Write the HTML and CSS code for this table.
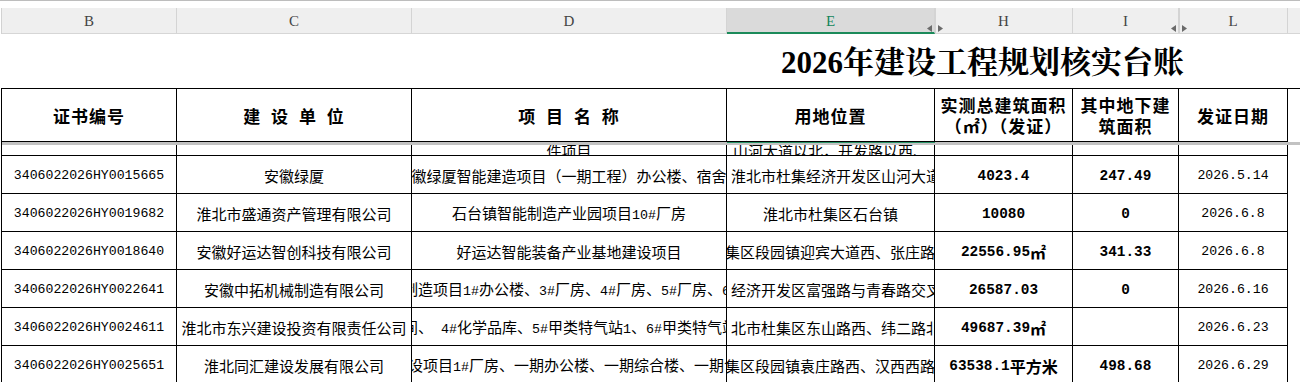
FILE: index.html
```html
<!DOCTYPE html>
<html lang="zh-CN">
<head>
<meta charset="utf-8">
<title>2026年建设工程规划核实台账</title>
<link rel="stylesheet" href="styles.css">
</head>
<body>
<div class="sheet">
  <div class="topline"></div>
  <div class="colhead">
    <div class="ch">B</div>
    <div class="ch">C</div>
    <div class="ch">D</div>
    <div class="ch sel">E</div>
    <div class="ch hid">H<svg class="mark" width="16" height="8" viewBox="0 0 16 8"><polygon points="5,0 5,7 0,3.5" fill="#6b6b6b"/><polygon points="11,0 11,7 16,3.5" fill="#6b6b6b"/></svg></div>
    <div class="ch">I</div>
    <div class="ch hid">L<svg class="mark" width="16" height="8" viewBox="0 0 16 8"><polygon points="5,0 5,7 0,3.5" fill="#6b6b6b"/><polygon points="11,0 11,7 16,3.5" fill="#6b6b6b"/></svg></div>
    <div class="ch end"></div>
  </div>
  <div class="titlerow">
    <h1 class="title"><span class="tnum">2026</span>年建设工程规划核实台账</h1>
  </div>
  <div class="tbl">
    <!-- header -->
    <div class="c hd"><div>证书编号</div></div>
    <div class="c hd"><div class="sp">建 设 单 位</div></div>
    <div class="c hd"><div class="sp">项 目 名 称</div></div>
    <div class="c hd"><div>用地位置</div></div>
    <div class="c hd"><div>实测总建筑面积<br>（㎡）（发证）</div></div>
    <div class="c hd"><div>其中地下建<br>筑面积</div></div>
    <div class="c hd"><div>发证日期</div></div>
    <div class="x"></div>
    <!-- freeze band -->
    <div class="bd"></div>
    <div class="bd"></div>
    <div class="bd"></div>
    <div class="bd g"></div>
    <div class="bd"></div>
    <div class="bd"></div>
    <div class="bd"></div>
    <div class="bd"></div>
    <!-- clipped row -->
    <div class="c part"></div>
    <div class="c part"></div>
    <div class="c part"><span>件项目</span></div>
    <div class="c part"><span>山河大道以北，开发路以西、</span></div>
    <div class="c part"></div>
    <div class="c part"></div>
    <div class="c part"></div>
    <div class="x"></div>
    <!-- row 1 -->
    <div class="c r id">3406022026HY0015665</div>
    <div class="c r">安徽绿厦</div>
    <div class="c r"><span>安徽绿厦智能建造项目（一期工程）办公楼、宿舍楼</span></div>
    <div class="c r l"><span class="p4">淮北市杜集经济开发区山河大道以北</span></div>
    <div class="c r"><span class="bn">4023.4</span></div>
    <div class="c r"><span class="bn">247.49</span></div>
    <div class="c r dt">2026.5.14</div>
    <div class="x"></div>
    <!-- row 2 -->
    <div class="c r id">3406022026HY0019682</div>
    <div class="c r">淮北市盛通资产管理有限公司</div>
    <div class="c r"><span>石台镇智能制造产业园项目<span class="a">10#</span>厂房</span></div>
    <div class="c r"><span>淮北市杜集区石台镇</span></div>
    <div class="c r"><span class="bn">10080</span></div>
    <div class="c r"><span class="bn">0</span></div>
    <div class="c r dt">2026.6.8</div>
    <div class="x"></div>
    <!-- row 3 -->
    <div class="c r id">3406022026HY0018640</div>
    <div class="c r">安徽好运达智创科技有限公司</div>
    <div class="c r"><span>好运达智能装备产业基地建设项目</span></div>
    <div class="c r l"><span class="m2">集区段园镇迎宾大道西、张庄路东</span></div>
    <div class="c r"><span class="bn">22556.95</span><span class="bc">㎡</span></div>
    <div class="c r"><span class="bn">341.33</span></div>
    <div class="c r dt">2026.6.8</div>
    <div class="x"></div>
    <!-- row 4 -->
    <div class="c r id">3406022026HY0022641</div>
    <div class="c r">安徽中拓机械制造有限公司</div>
    <div class="c r l"><span class="m9">制造项目<span class="a">1#</span>办公楼、<span class="a">3#</span>厂房、<span class="a">4#</span>厂房、<span class="a">5#</span>厂房、<span class="a">6#</span>厂房</span></div>
    <div class="c r l"><span class="p4">经济开发区富强路与青春路交叉口</span></div>
    <div class="c r"><span class="bn">26587.03</span></div>
    <div class="c r"><span class="bn">0</span></div>
    <div class="c r dt">2026.6.16</div>
    <div class="x"></div>
    <!-- row 5 -->
    <div class="c r id">3406022026HY0024611</div>
    <div class="c r">淮北市东兴建设投资有限责任公司</div>
    <div class="c r l"><span class="m9">间、<span class="a"> 4#</span>化学品库、<span class="a">5#</span>甲类特气站<span class="a">1</span>、<span class="a">6#</span>甲类特气站<span class="a">2</span></span></div>
    <div class="c r l"><span class="p4">北市杜集区东山路西、纬二路北侧</span></div>
    <div class="c r"><span class="bn">49687.39</span><span class="bc">㎡</span></div>
    <div class="c r"></div>
    <div class="c r dt">2026.6.23</div>
    <div class="x"></div>
    <!-- row 6 -->
    <div class="c r id">3406022026HY0025651</div>
    <div class="c r">淮北同汇建设发展有限公司</div>
    <div class="c r l"><span class="m4">设项目<span class="a">1#</span>厂房、一期办公楼、一期综合楼、一期食堂</span></div>
    <div class="c r l"><span class="m2">集区段园镇袁庄路西、汉西西路东</span></div>
    <div class="c r"><span class="bn">63538.1</span><span class="bc">平方米</span></div>
    <div class="c r"><span class="bn">498.68</span></div>
    <div class="c r dt">2026.6.29</div>
    <div class="x"></div>
  </div>
</div>
</body>
</html>
```

FILE: styles.css
```css
* {
  box-sizing: border-box;
  margin: 0;
  padding: 0;
}

body {
  margin: 0;
  background: #ffffff;
  color: #000000;
  font-family: "Noto Sans CJK SC", sans-serif;
  width: 1300px;
  height: 382px;
  overflow: hidden;
}

.sheet {
  width: 1300px;
}

.topline {
  height: 8px;
  border-top: 1px solid #bdbdbd;
}

.colhead {
  display: grid;
  grid-template-columns: 175px 235px 315px 208px 138px 106px 109px 1fr;
  height: 26px;
  margin-left: 1px;
  border-left: 1px solid #d2d2d2;
}

.ch {
  position: relative;
  display: flex;
  align-items: center;
  justify-content: center;
  padding-top: 2px;
  background: #efefef;
  border-right: 1px solid #d4d4d4;
  border-bottom: 1px solid #d6d6d6;
  font-family: "Liberation Serif", serif;
  font-size: 15px;
  color: #444444;
}

.ch.sel {
  background: #dadada;
  border-bottom: 2px solid #1b8a5a;
  color: #13855a;
}

.ch.hid {
  box-shadow: inset 1px 0 0 #d4d4d4;
}

.ch.end {
  border-right: none;
}

.mark {
  position: absolute;
  left: -8px;
  top: 17px;
}

.titlerow {
  height: 54px;
  display: flex;
  align-items: center;
  padding-left: 781px;
  padding-top: 3px;
}

.title {
  font-family: "Liberation Serif", "Noto Serif CJK SC", "Noto Sans CJK SC", serif;
  font-size: 31px;
  font-weight: 700;
  line-height: 34px;
  white-space: nowrap;
}

.tnum {
  font-family: "Liberation Serif", serif;
}

.tbl {
  display: grid;
  grid-template-columns: 175px 235px 315px 208px 138px 106px 109px 1fr;
  grid-template-rows: 53px 3px 11px repeat(6, 38px);
  margin-left: 1px;
  border-left: 1px solid #000000;
  border-top: 1px solid #000000;
}

.c {
  display: flex;
  align-items: center;
  justify-content: center;
  overflow: hidden;
  white-space: nowrap;
  border-right: 1px solid #000000;
  border-bottom: 1px solid #000000;
  font-size: 15px;
  line-height: 18px;
}

.c.r {
  padding-top: 3px;
}

.c.l {
  justify-content: flex-start;
}

.x {
  border-bottom: none;
}

.hd {
  font-weight: 700;
  font-size: 17px;
  line-height: 21px;
  letter-spacing: 1px;
  text-align: center;
  white-space: normal;
}

.hd .sp {
  word-spacing: 5px;
}

.bd {
  background: #c2c2c2;
}

.bd.g {
  border-top: 1px solid #2a9468;
}

.part {
  align-items: flex-end;
  line-height: 15px;
}

.part span {
  margin-bottom: -3px;
}

.id,
.dt {
  font-family: "Liberation Mono", monospace;
  font-size: 13.2px;
}

.a {
  font-family: "Liberation Mono", monospace;
  font-size: 13.33px;
}

.bn {
  font-family: "Liberation Mono", monospace;
  font-weight: 700;
  font-size: 14.4px;
}

.bc {
  font-weight: 700;
  font-size: 16px;
}

.p4 {
  margin-left: 4px;
}

.m2 {
  margin-left: -2px;
}

.m4 {
  margin-left: -4px;
}

.m9 {
  margin-left: -9px;
}
```
